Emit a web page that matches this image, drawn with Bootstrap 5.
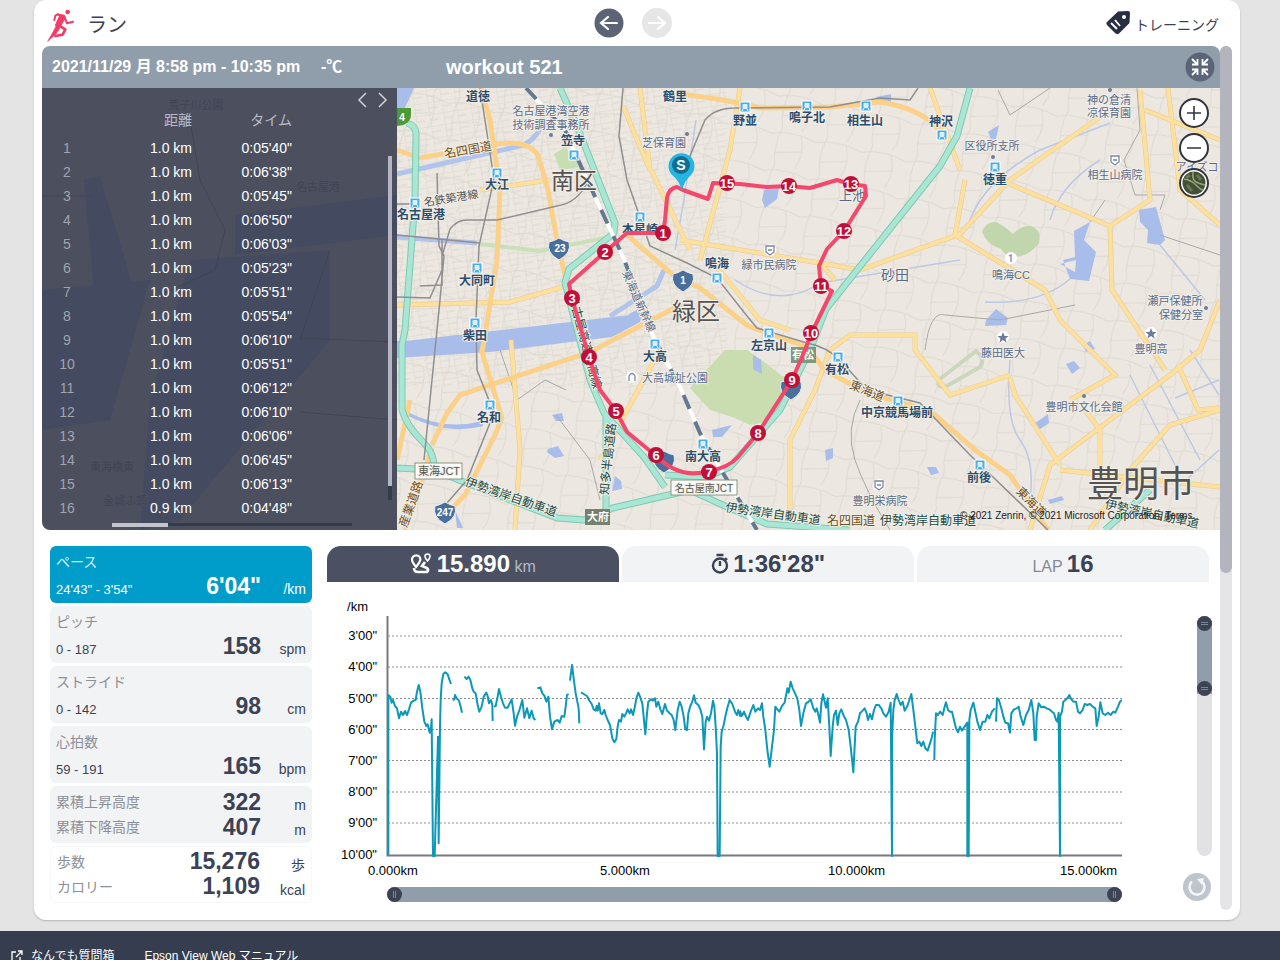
<!DOCTYPE html>
<html lang="ja">
<head>
<meta charset="utf-8">
<meta name="viewport" content="width=device-width, initial-scale=1">
<title>ラン - workout 521</title>
<link href="https://cdn.jsdelivr.net/npm/bootstrap@5.3.0/dist/css/bootstrap.min.css" rel="stylesheet">
<style>
:root { --ink:#3b4256; --slate:#909eab; --accent:#009cca; --pale:#f2f3f4; }
body { font-family:"Liberation Sans","Noto Sans CJK JP",sans-serif; font-size:14px; line-height:20px; color:var(--ink); background:#e4e4e4; }
button { font:inherit; }
.page-pad { padding:0 40px 11px 34px; }
.sheet { background:#fff; border-radius:12px; padding:0 8px 10px; box-shadow:0 1px 2px #b4b4b4; }
.sheet-head { display:grid; grid-template-columns:1fr auto 1fr; height:46px; padding:0 13px 0 4px; }
.sheet-head h1 { font-size:20px; line-height:28px; font-weight:400; margin:4px 0 0 11px; }
.round-btn { width:30px; height:30px; border:0; padding:0; border-radius:50%; display:flex; background:none; }
.info-bar { background:var(--slate); color:#fff; height:42px; padding:0 5px 0 10px; border-radius:8px 8px 0 0; font-weight:bold; font-size:16px; }
.info-bar .when { width:269px; }
.info-bar .temp { width:125px; }
.info-bar h2 { font-size:20px; font-weight:bold; }
.map-box { border-radius:0 0 0 8px; overflow:hidden; }
.map-svg { inset:0; width:100%; height:100%; }
.lap-panel { width:355px; background:rgba(62,67,84,.93); padding:0 0 10px; }
.lap-panel .pager { height:20px; padding:4px 6px 0 0; }
.pager button { border:0; background:none; padding:0; width:16px; height:16px; display:flex; }
.lap-tbl { width:100%; color:#fff; table-layout:fixed; }
.lap-tbl th, .lap-tbl td { height:24px; padding:0; font-weight:normal; text-align:right; }
.lap-tbl thead th { color:#b9bcc4; height:28px; padding-bottom:4px; }
.lap-tbl tbody th { color:#a0a4ae; text-align:center; }
.lap-tbl td:last-child, .lap-tbl th:last-child { padding-right:105px; }
.vbar { top:68px; right:5px; width:4px; height:344px; background:#363b4c; }
.vbar i { display:block; height:330px; background:#b4b6c4; }
.hbar { left:70px; bottom:4px; width:240px; height:3px; background:#363b4c; }
.hbar i { display:block; width:56px; height:4px; background:#c3c5cc; }
.map-tools { top:10px; right:11px; gap:5px; }
.map-tools button { background:#fff; border:2px solid #30343c; }
.rail-scroll { width:12px; background:#e5e5e7; border-radius:6px; }
.rail-scroll i { display:block; height:61%; background:#b3b4be; border-radius:6px; }
.lower { padding:16px 8px 7px; gap:15px; }
.stats { width:262px; gap:3px; }
.stat { height:57px; border:0; border-radius:6px; background:var(--pale); color:var(--ink); padding:3px 6px 0; text-align:left; display:block; width:100%; }
.stat.on { background:var(--accent); color:#fff; }
.stat .cap { color:#8b8f97; line-height:20px; }
.stat.on .cap { color:#d9f3fb; }
.stat .rng { font-size:13px; flex:1; padding-top:8px; }
.stat .val { font-size:23px; font-weight:bold; line-height:25px; }
.stat .unit { width:45px; text-align:right; padding-top:6px; }
.stat .row1 { display:flex; align-items:center; height:25px; }
.stat.two { padding-top:0; }
.stat.two .cap { flex:1; }
.stat.plain { background:#fff; border:1px solid #f8f8f8; padding:2px 6px 0; }
.stat .last { height:29px; }
.tabs { gap:3px; margin-right:3px; }
.tab { flex:1; border:0; height:36px; border-radius:14px 14px 0 0; background:var(--pale); color:var(--ink); font-size:16px; }
.tab b { font-size:24px; line-height:32px; }
.tab span { color:#868a94; }
.tab.on { background:#4b5162; color:#fff; }
.tab.on span { color:#b5b8c2; }
.chart-col { padding-top:14px; }
.chart-svg { width:100%; display:block; }
.chart-svg text { font-size:13px; fill:#000; }
.duo { display:grid; border-radius:8px; }
.duo input { grid-area:1/1; appearance:none; -webkit-appearance:none; background:none; margin:0; pointer-events:none; }
.duo-h { height:15px; margin:7px 0 0 60px; background:var(--slate); }
.duo-h input { width:100%; height:15px; }
.duo-v { width:15px; height:240px; background:linear-gradient(var(--slate) 78px,#e2e2e4 78px); }
.duo-v input { writing-mode:vertical-lr; width:15px; height:240px; }
.duo input::-webkit-slider-thumb { appearance:none; -webkit-appearance:none; pointer-events:auto; width:15px; height:15px; border-radius:50%; background:linear-gradient(90deg,transparent 6px,#7c8594 6px 7px,transparent 7px 8px,#7c8594 8px 9px,transparent 9px) center/15px 7px no-repeat,#3b4354; }
.duo-v input::-webkit-slider-thumb { background:linear-gradient(transparent 6px,#7c8594 6px 7px,transparent 7px 8px,#7c8594 8px 9px,transparent 9px) center/7px 15px no-repeat,#3b4354; }
.side-col { width:90px; padding-top:34px; gap:16px; }
.foot { background:#353d4f; flex:1 0 60px; padding:15px 11px; font-size:12px; gap:30px; }
.foot a { color:#fff; text-decoration:none; }
.m-st { font-weight:bold; fill:#2c4d6b; }
.m-poi { fill:#5a6b88; }
.m-big { fill:#555452; }
.m-road { fill:#6e4f22; }
.m-exp { fill:#1c4a3f; }
.m-box { fill:#555c4d; }
.m-w { fill:#fff; font-weight:bold; }
.labels text { text-anchor:middle; dominant-baseline:central; paint-order:stroke; stroke:#f1eee8; stroke-width:2px; }
.labels .m-w { stroke:none; }
</style>
</head>
<body class="vh-100 overflow-hidden d-flex flex-column">
<main class="page-pad">
<div class="sheet">
  <header class="sheet-head align-items-center">
    <div class="d-flex align-items-center">
      <svg width="30" height="38" viewBox="0 0 30 38" aria-hidden="true"><g transform="translate(-16 -4) scale(.33333)" fill="#f43a68" stroke="#f43a68" stroke-linejoin="round" stroke-linecap="round"><circle cx="113" cy="36" r="7" stroke="none"/><path d="M82 42L104 46 106 54 90 80 76 76 88 50Z" stroke-width="3"/><g fill="none"><path d="M84 43L76 47 73 60M104 52L111 70 129 65" stroke-width="6"/><path d="M86 76L106 88 98 104 76 108" stroke-width="8"/></g><path d="M80 76L90 84 78 102 53 124 68 98Z" stroke-width="2"/></g></svg>
      <h1>ラン</h1>
    </div>
    <nav class="d-flex" style="gap:18px">
      <button class="round-btn" aria-label="前へ"><svg width="30" height="30"><circle cx="15" cy="15" r="14.500" fill="#5b6375"/><path d="M23 15H7M14 9l-7 6 7 6" fill="none" stroke="#fff" stroke-width="2.200" stroke-linecap="round"/></svg></button>
      <button class="round-btn" aria-label="次へ"><svg width="30" height="30"><circle cx="15" cy="15" r="15" fill="#e6e6e6"/><path d="M7 15h16M16 9l7 6-7 6" fill="none" stroke="#fff" stroke-width="2.200" stroke-linecap="round"/></svg></button>
    </nav>
    <div class="d-flex align-items-center justify-content-end gap-1">
      <svg width="26" height="26" viewBox="0 0 26 26"><path d="M13 1.500 L23 1 Q25 1 25 3 L24.500 13 L14 23.500 Q12 25 10 23 L2 15 Q0.500 13 2 12Z" fill="#262e40"/><circle cx="19" cy="7" r="2" fill="#fff"/><path d="M6 13l6 6M10 10l5 6" stroke="#fff" stroke-width="1.900"/></svg>
      <span class="pt-1">トレーニング</span>
    </div>
  </header>
  <div class="d-flex">
    <div class="flex-fill">
      <div class="info-bar d-flex align-items-center">
        <span class="when text-nowrap">2021/11/29 月 8:58 pm - 10:35 pm</span><span class="temp">-℃</span>
        <h2 class="mb-0 flex-fill">workout 521</h2>
        <button class="round-btn" aria-label="縮小"><svg width="30" height="30"><circle cx="15" cy="15" r="14.500" fill="#5b6578"/><path d="M7 7l5 5M12.500 7v5.500H7M23 7l-5 5M17.500 7v5.500H23M7 23l5-5M12.500 23v-5.500H7M23 23l-5-5M17.500 23v-5.500H23" fill="none" stroke="#fff" stroke-width="1.800"/></svg></button>
      </div>
      <section class="map-box position-relative">
        <svg class="map-svg position-absolute" viewBox="42 88 1178 442" preserveAspectRatio="xMidYMid slice" role="img" aria-label="ルート地図">
          <defs>
            <pattern id="blocks" width="14" height="12" patternUnits="userSpaceOnUse" patternTransform="rotate(-9)"><path d="M0 0H14M0 0V12M0 6H9" fill="none" stroke="#dcd7ce" stroke-width="1"/></pattern>
            <pattern id="lanes" width="46" height="38" patternUnits="userSpaceOnUse" patternTransform="rotate(12)"><path d="M0 8Q20 0 46 8M10 0Q4 20 10 38M30 5Q38 22 30 38M8 26L34 20" fill="none" stroke="#ddd9d1" stroke-width="1"/></pattern>
            <g id="stn"><rect x="-5" y="-5" width="10" height="10" fill="#4baee6" stroke="#fff"/><rect x="-2.500" y="-3" width="5" height="5" rx="1" fill="#d9f0fc"/><path d="M-3 4l1-2M3 4l-1-2" stroke="#fff"/></g>
            <path id="shield" d="M-10-7Q-5-8 0-11Q5-8 10-7Q13 4 0 11Q-13 4-10-7Z" fill="#4a6f9b" stroke="#e9eef3"/>
          </defs>
          <rect x="42" y="88" width="1178" height="442" fill="#ece8e1"/>
          <rect x="397" y="88" width="330" height="300" fill="url(#blocks)"/>
          <rect x="397" y="88" width="823" height="442" fill="url(#lanes)"/>
          <path d="M235 215L397 195V235L235 255ZM42 290L150 280 110 420 42 430ZM190 260L330 250 330 340 180 520 140 530 150 400ZM84 180l16-4 34 114-40 0Z" fill="#8faaf0"/>
          <path d="M190 120L200 180 225 230 215 270 150 300M42 196H90M300 338L397 342M300 412L397 420M330 250L300 340" fill="none" stroke="#555" stroke-width="1"/>
          <!-- water and parks -->
          <g fill="#a9bdea">
            <path d="M397 342L490 346 610 332 625 325 640 308 631 313 610 328 490 338 397 341 397 358 490 352 612 337 640 322 645 308 L630 315Z"/>
            <path d="M1139 210L1156 207 1165 240 1160 245 1147 243 1148 230 1140 222ZM1074 231L1090 222 1084 240 1096 252 1089 281 1070 279 1063 260 1075 257ZM1076 260L1060 264 1075 272ZM986 320L996 309 1008 318 1006 325 985 326ZM1066 364L1074 361 1080 368 1072 374ZM1083 345l7-4 5 8-9 3ZM1034 424l14-10 1 9-10 7ZM1048 500l14-4 2 4-14 4ZM753 355l8 5 1 14-9-5ZM712 430l20-5-10 12-9 0ZM825 450l8-2 0 10-7 3ZM927 467l9 0 3 6-8 2ZM764 190l15-2-2 11-12 9-3-8ZM988 132l11-7-3 14-5 0ZM876 97l15-3 0 9-12 0ZM548 449l10-3 6 10-9 2-8-6ZM552 415l10-2 2 8-8 0ZM615 476l6 5 1 8-10 2ZM397 88l17 0-10 22-7 5Z"/>
            <path d="M408 416q40 20 75 10v-5q-40 10-75-9ZM455 510l8 18h-6Z"/>
          </g>
          <path d="M690 388l35-38 22 0 20 14 15 12 15 5-20 20-15 22-12 2-15-7-25-8Z" fill="#c9ddb0"/>
          <path d="M753 355l8 5 1 14-9-5Z" fill="#a9bdea"/>
          <path d="M982 232q4-11 14-10 10 5 17 12 8-9 18-8 11 4 8 17-10 14-26 14-6 1-12-8-14-4-19-17Z" fill="#c1d6ad"/>
          <path d="M554 154l10-6 10 5 6 14-20 3Z" fill="#c6deb2"/>
          <path d="M940 379q-5 8 5 8l35-20q6-8-4-16Z" fill="none" stroke="#cad7bd" stroke-width="4"/>
          <g fill="none" stroke="#b3c4ec" stroke-width="5"><path d="M397 174L524 145Q540 136 544 118M397 237L477 243M610 316L657 286 664 270"/></g>
          <path d="M480 244L540 251 604 238" fill="none" stroke="#cbe0b9" stroke-width="4"/>
          <g fill="none" stroke="#bcc8e6" stroke-width="1.500"><path d="M1160 245L1205 300M1070 279Q1040 305 985 302M1150 365L1200 460M1130 375L1175 465M1175 398L1219 380M1190 350L1219 395M1175 490L1219 450M735 280Q780 310 820 283L960 260M696 120L684 200 675 250M1010 360Q1005 420 1020 440T1030 500M1100 160Q1060 185 1050 220M970 220Q985 180 1040 150L1110 123"/></g>
          <g fill="none" stroke="#a9a9a7" stroke-width="1"><path d="M998 90L1010 115 1050 88M1137 88L1140 130 1124 160 1135 195 1165 195 1160 210M1105 200L1090 222M860 400Q845 430 855 460T890 530M925 350Q930 310 945 315L1000 320 1075 305M500 350L517 400 545 380 566 390M556 415L590 460 600 500M1160 235L1220 255"/></g>
          <!-- local roads -->
          <g fill="none" stroke="#e9c98f" stroke-width="5"><path d="M740 88L730 150 700 260M680 240L820 263 860 270 960 234 1010 180 1110 110M1000 180L1110 226M965 180L955 235 1045 290 1060 320 1115 375 1070 400M1168 88L1180 190 1220 225M1140 90L1150 200 1110 226 1112 290 1165 370M1145 110L1220 140M1220 300L1200 350 1170 375 1050 465 1030 530M1010 378L1015 395 1060 465M1178 365L1198 410 1220 408M1220 410L1170 425 1130 470 1090 530M1010 375L950 395 915 350 915 335 850 335 830 350M830 350L815 390 790 440 790 510M835 280L820 263M397 305L510 302 570 285M511 340L520 450 515 530M600 460L660 350M715 265L760 320 790 330M930 88L960 170M1085 410L1100 430 1100 475M1060 470L1220 487M623 106L650 170 640 88M650 168L690 250M480 190L550 180"/></g>
          <g fill="none" stroke="#fbe09f" stroke-width="4"><path d="M740 88L730 150 700 260M680 240L820 263 860 270 960 234 1010 180 1110 110M1000 180L1110 226M965 180L955 235 1045 290 1060 320 1115 375 1070 400M1168 88L1180 190 1220 225M1140 90L1150 200 1110 226 1112 290 1165 370M1145 110L1220 140M1220 300L1200 350 1170 375 1050 465 1030 530M1010 378L1015 395 1060 465M1178 365L1198 410 1220 408M1220 410L1170 425 1130 470 1090 530M1010 375L950 395 915 350 915 335 850 335 830 350M830 350L815 390 790 440 790 510M835 280L820 263M397 305L510 302 570 285M511 340L520 450 515 530M600 460L660 350M715 265L760 320 790 330M930 88L960 170M1085 410L1100 430 1100 475M1060 470L1220 487M623 106L650 170 640 88M650 168L690 250M480 190L550 180"/></g>
          <g fill="none" stroke="#fbd089" stroke-width="5"><path d="M481 88L490 120 500 190 497 260 485 335 482 352 502 418 495 435 465 495 445 515M397 150L420 158 487 146Q525 137 538 155L548 190 557 240 567 285M432 445L447 413 460 395 590 352 690 300M627 235L673 275 700 288 748 326 807 347 825 370 866 393 910 405 935 415 975 450 1010 475 1048 530M432 448L405 530M397 460L410 400M680 94Q730 100 760 108L830 107 880 102Q920 108 940 130"/></g>
          <!-- expressways -->
          <g fill="none" stroke="#7ec9b3" stroke-width="7" stroke-linejoin="round"><path d="M407 123Q417 126 416 136L415 200 405 330 402 345V410Q407 427 424 443 434 453 434 467M397 468L434 470 464 482 557 518 584 520 613 508 690 490 727 507 767 524 850 530M560 88L577 126 615 223 614 233 569 269 565 283 590 380 604 413 644 457 665 487M606 415V520M970 88L957 136 940 166 826 309 810 350 780 410 730 467 707 477 665 475M1105 530L1150 490"/></g>
          <g fill="none" stroke="#a9e6d4" stroke-width="5" stroke-linejoin="round"><path d="M407 123Q417 126 416 136L415 200 405 330 402 345V410Q407 427 424 443 434 453 434 467M397 468L434 470 464 482 557 518 584 520 613 508 690 490 727 507 767 524 850 530M560 88L577 126 615 223 614 233 569 269 565 283 590 380 604 413 644 457 665 487M606 415V520M970 88L957 136 940 166 826 309 810 350 780 410 730 467 707 477 665 475M1105 530L1150 490"/></g>
          <!-- railways -->
          <g fill="none" stroke="#908f90" stroke-width="1.500"><path d="M480 88L494 179 479 246 476 320 477 370 494 413 467 480 447 503M442 256L450 229Q457 220 467 220L497 220 557 206Q577 203 587 183M437 173L439 246 444 256 440 300 424 460M442 240V285L420 286M397 297L430 298 442 270M397 204H415M623 88L619 136 627 180 650 246 687 263 717 278 747 316 757 328 807 343Q827 347 840 360L867 390 920 403 970 455 993 477 1048 530M680 180L705 120Q715 108 735 108M397 235L480 243M735 108L830 107 880 98 910 100 918 88"/></g>
          <path d="M526 88L565 130 584 173 624 259 650 330 680 387 700 433 723 473 757 530" fill="none" stroke="#fff" stroke-width="4"/>
          <path d="M526 88L565 130 584 173 624 259 650 330 680 387 700 433 723 473 757 530" fill="none" stroke="#647991" stroke-width="4" stroke-dasharray="15 14"/>
          <g id="stations"></g>
          <use href="#shield" x="559" y="249"/><use href="#shield" x="683" y="281"/><use href="#shield" x="445" y="513"/><use href="#shield" x="791" y="389"/><use href="#shield" x="664" y="462"/>
          <path d="M397 108h14v6q0 11-14 12Z" fill="#4c9a35"/>
          <g fill="#fff" stroke="#8b927f"><rect x="415" y="463" width="47" height="16"/><rect x="671" y="480" width="66" height="15"/></g>
          <rect x="585" y="509" width="25" height="16" fill="#75806f"/><rect x="791" y="347" width="25" height="16" fill="#7d9a7c"/>
          <g class="labels" id="labels"></g>
          <g fill="#fff"><circle cx="770" cy="250" r="6"/><circle cx="1115" cy="160" r="6"/><circle cx="879" cy="485" r="6"/><circle cx="1011" cy="258" r="6"/><circle cx="1003" cy="337" r="6"/><circle cx="1151" cy="333" r="6"/><circle cx="632" cy="377" r="6"/></g>
          <g fill="none" stroke="#7a86a3" stroke-width="1.300"><path d="M766 246h8v6l-4 3-4-3ZM768 250h4M1111 156h8v6l-4 3-4-3ZM1113 160h4M875 481h8v6l-4 3-4-3ZM877 485h4M1009 256l2-1v7M629 381v-5q3-5 6 0v5"/></g>
          <g fill="#6c7b9a"><path id="star" d="M1003 332l1.500 4h4l-3 2.500 1 4-3.500-2.500-3.500 2.500 1-4-3-2.500h4Z"/><use href="#star" x="148" y="-4"/><circle cx="551" cy="135" r="2"/><circle cx="687" cy="134" r="2"/><circle cx="993" cy="157" r="2"/><circle cx="1084" cy="396" r="2"/><circle cx="1206" cy="308" r="2"/><circle cx="1110" cy="90" r="2"/></g>
          <path d="M683 190L677 187Q669 188 667 198L665 220 663 233 627 233 605 252 569 284 572 298 589 357 600 390 616 411 627 432 655 455Q680 480 709 471 728 468 738 457L758 433 792 380 805 350 811 334 832 291 821 286 819 266 827 249 844 231 866 196 865 186 851 184 837 180 810 188 788 186 767 187 740 184 713 183 708 199Z" fill="none" stroke="#f4476c" stroke-width="4" stroke-linejoin="round"/>
          <g class="labels" id="marks"></g>
          <path d="M682 191Q679 180 672 175A13 13 0 1 1 691 175Q684 181 682 191Z" fill="#27b5df"/><circle cx="681" cy="165" r="9" fill="#116e92"/>
          <g class="labels"><text class="m-w" x="681" y="165" font-size="14">S</text></g>
          <text x="960" y="519" font-size="10" fill="#222">© 2021 Zenrin, © 2021 Microsoft Corporation, Terms</text>
        </svg>
        <div class="lap-panel position-relative">
          <div class="pager d-flex justify-content-end gap-1">
            <button aria-label="前の項目"><svg width="16" height="16"><path d="M11 1L4 8l7 7" fill="none" stroke="#cfd1d8" stroke-width="1.500"/></svg></button>
            <button aria-label="次の項目"><svg width="16" height="16"><path d="M4 1l7 7-7 7" fill="none" stroke="#cfd1d8" stroke-width="1.500"/></svg></button>
          </div>
          <table class="lap-tbl"><colgroup><col style="width:50px"><col style="width:100px"><col></colgroup>
            <thead><tr><th></th><th>距離</th><th>タイム</th></tr></thead><tbody id="laps"></tbody></table>
          <div class="vbar position-absolute"><i></i></div><div class="hbar position-absolute"><i></i></div>
        </div>
        <div class="map-tools position-absolute d-flex flex-column">
          <button class="round-btn" aria-label="拡大"><svg width="26" height="26"><path d="M13 6v14M6 13h14" stroke="#30343c" stroke-width="1.600"/></svg></button>
          <button class="round-btn" aria-label="縮小"><svg width="26" height="26"><path d="M6 13h14" stroke="#30343c" stroke-width="1.600"/></svg></button>
          <button class="round-btn" aria-label="航空写真"><svg width="26" height="26"><circle cx="13" cy="13" r="11.500" fill="#445036"/><path d="M3 9q7 1 12 6t7 5M12 2q-1 8 3 10t9 3" fill="none" stroke="#98a17d" stroke-width="1.500"/><path d="M6 15l5 6M16 5l4 5M9 5l-4 3" stroke="#687653" stroke-width="3"/></svg></button>
        </div>
      </section>
      <section class="lower d-flex">
        <div class="stats d-flex flex-column">
          <button class="stat on"><div class="cap">ペース</div><div class="row1 last"><span class="rng">24'43" - 3'54"</span><span class="val">6'04"</span><span class="unit">/km</span></div></button>
          <button class="stat"><div class="cap">ピッチ</div><div class="row1 last"><span class="rng">0 - 187</span><span class="val">158</span><span class="unit">spm</span></div></button>
          <button class="stat"><div class="cap">ストライド</div><div class="row1 last"><span class="rng">0 - 142</span><span class="val">98</span><span class="unit">cm</span></div></button>
          <button class="stat"><div class="cap">心拍数</div><div class="row1 last"><span class="rng">59 - 191</span><span class="val">165</span><span class="unit">bpm</span></div></button>
          <button class="stat two"><div class="row1"><span class="cap">累積上昇高度</span><span class="val">322</span><span class="unit">m</span></div><div class="row1"><span class="cap">累積下降高度</span><span class="val">407</span><span class="unit">m</span></div></button>
          <div class="stat two plain"><div class="row1"><span class="cap">歩数</span><span class="val">15,276</span><span class="unit">歩</span></div><div class="row1"><span class="cap">カロリー</span><span class="val">1,109</span><span class="unit">kcal</span></div></div>
        </div>
        <div class="flex-fill">
          <div class="tabs d-flex">
            <button class="tab on"><svg width="22" height="22" viewBox="0 0 22 22" style="vertical-align:-3px"><g fill="none" stroke="#fff" stroke-width="2.200"><path d="M6 14Q2 9 2 6.500a4.200 4.200 0 0 1 8.400 0Q10 9 6 14Z"/><path d="M17.500 8Q15 5 15 3.500a2.500 2.500 0 0 1 5 0Q20 5 17.500 8Z" stroke-width="1.600"/><path d="M4 15q0 4 4 4h9q2-2 0-4l-5-2 3-4" stroke-width="2.600"/></g></svg> <b>15.890</b> <span>km</span></button>
            <button class="tab"><svg width="18" height="22" viewBox="0 0 18 22" style="vertical-align:-3px"><g fill="none" stroke="#3b4256" stroke-width="2.400"><circle cx="9" cy="12.500" r="7"/><path d="M5.500 2h7M9 8v5M14 5l2 2"/></g></svg> <b>1:36'28"</b></button>
            <button class="tab"><span>LAP</span> <b>16</b></button>
          </div>
          <div class="d-flex">
            <div class="chart-col flex-fill">
              <svg class="chart-svg" viewBox="327 596 795 284" role="img" aria-label="ペースのグラフ">
                <g stroke="#8d8d8d" stroke-dasharray="2 2"><path d="M388 636H1122M388 667H1122M388 698.500H1122M388 729.500H1122M388 760.500H1122M388 792H1122M388 823H1122"/></g>
                <path d="M387.500 616V855.500H1122" fill="none" stroke="#777b80" stroke-width="2"/>
                <g text-anchor="end"><text x="368" y="611">/km</text><text x="377" y="640">3'00"</text><text x="377" y="671">4'00"</text><text x="377" y="703">5'00"</text><text x="377" y="734">6'00"</text><text x="377" y="765">7'00"</text><text x="377" y="796">8'00"</text><text x="377" y="827">9'00"</text><text x="377" y="859">10'00"</text></g>
                <g><text x="368" y="875">0.000km</text><text x="600" y="875">5.000km</text><text x="828" y="875">10.000km</text><text x="1060" y="875">15.000km</text></g>
                <g fill="none" stroke="#0c98b8" stroke-width="6" stroke-linejoin="round">
                  <g transform="translate(325 540) scale(.33333)"><path d="M190 948V465L196 470 200 488 204 480 210 498 216 505 222 535 228 515 234 525 240 513 246 525 252 508 258 488 266 482 272 480 276 455 281 435 286 455 292 505 298 545 304 558 308 553 314 578 318 562 320 538 324 948 329 948 336 700 339 590 341 910 345 560 347 480 350 430 355 402 361 397 368 403 373 418 378 432M383 480L388 478 390 465 395 475 402 482 407 500 411 518M418 410L425 417 431 410 436 420 442 445 446 455 452 460 458 495 463 515 470 500 476 470 484 458 488 468 492 490 498 480 502 495 503 543M507 500L512 498 517 475 522 447 528 470 534 490 540 503 548 503 554 490 560 478 566 520 570 557 576 530 584 508 592 480 598 533 606 505 613 535 620 512 626 535 631 540M637 445L646 442 652 460 658 467 664 485 670 470 675 530 681 568 688 545 698 540 704 548 710 528 718 530 722 500 726 465 731 462M735 422L741 375 746 415 752 460 757 485 761 505 763 550M768 457L776 462 786 468 792 480 800 492 806 508 812 512 815 498 818 512 822 490 827 520 832 522 838 510 842 525 848 540 855 555 862 595 868 607 874 597 878 560 882 540 888 545 892 522 898 530 904 518 908 508 914 520 918 508 924 525 928 508 934 475 940 458 946 472 952 490 956 530 961 583 966 520 970 485 978 478 984 482 990 475 994 500 1000 485 1006 508 1012 522 1020 492 1026 512 1034 520 1040 525 1046 540 1051 570 1058 510 1064 485 1070 500 1076 530 1081 568 1086 570 1090 520 1096 498 1102 485 1107 466 1112 488 1120 495 1126 508 1132 530 1137 628 1142 545 1146 530 1152 542 1158 520 1164 482 1168 500 1172 560 1176 640 1178 948 1184 948 1187 620 1190 575 1196 555 1202 525 1208 500 1214 480 1222 492 1230 515 1236 525 1240 510 1246 530"/></g>
                  <g transform="translate(740 540) scale(.33333)"><path d="M0 512L5 528 12 515 18 530 24 540 32 515 40 495 46 515 54 505 60 510 66 490 70 530 76 570 82 630 89 680 96 620 102 570 106 500 112 508 118 515 126 498 134 488 142 445 146 458 152 425 158 445 164 458 172 475 178 510 183 558 190 520 198 490 206 485 212 478 220 505 226 515 230 505 234 520 240 548 244 490 249 463 254 485 258 503 263 475 268 560 272 648 278 560 282 525 288 512 293 555 298 520 304 508 310 525 318 540 326 570 332 620 340 697 347 560 354 545 360 520 368 512 374 505 380 520 384 540 390 522 396 538 402 510 408 495 416 495 424 505 430 520 438 530 446 515 452 488 456 948 456 600 460 510 464 480 470 462 476 480 482 495 488 485 494 512 502 498 508 480 514 462 520 510 526 560 532 610 538 605 544 618 550 605 556 625 563 632 570 610 576 590 579 575M583 660L584 600 588 520 594 525 600 515 608 525 614 500 618 487 624 510 630 515 636 515 642 540 648 565 654 577 660 560 666 572 674 560 682 548 682 948 686 948 688 540 692 510 700 488 706 515 712 545 720 570 728 545 736 545 742 525 748 535 756 515 764 505M768 545L771 475 776 478 784 505 790 530 796 548 804 550 810 578 814 520 822 508 830 505 836 500 842 530 850 555 858 525 866 510 874 480 880 520 884 600 888 600 890 530 896 490 904 502 912 500 920 505 928 508 936 515 942 520 948 540 952 545 956 518 960 948 960 530 966 515 970 485 976 480 982 475 988 465 994 478 1000 485 1008 485 1014 515 1020 520 1028 510 1034 492 1042 495 1050 492 1058 500 1066 505 1070 558 1076 530 1081 487 1088 520 1096 525 1104 518 1112 525 1120 515 1126 518 1134 500 1140 485 1146 480"/></g>
                </g>
              </svg>
              <div class="duo duo-h"><input type="range" value="0" aria-label="開始位置"><input type="range" value="100" aria-label="終了位置"></div>
            </div>
            <div class="side-col d-flex flex-column align-items-end">
              <div class="duo duo-v"><input type="range" value="0" aria-label="上限"><input type="range" value="29" aria-label="下限"></div>
              <button class="round-btn" aria-label="リセット"><svg width="30" height="30"><circle cx="15" cy="15" r="14" fill="#bec5cc"/><path d="M10 9.500a7.500 7.500 0 1 0 10 0" fill="none" stroke="#f4f6f8" stroke-width="2.600"/><path d="M15 7l7-1-2 7Z" fill="#f4f6f8"/></svg></button>
            </div>
          </div>
        </div>
      </section>
    </div>
    <div class="rail-scroll"><i></i></div>
  </div>
</div>
</main>
<footer class="foot d-flex align-items-start">
  <a href="#"><svg width="12" height="12" style="vertical-align:-2px;margin-right:8px"><path d="M5 2H1v9h8V7M7 1h4v4M11 1L5 7" fill="none" stroke="#fff" stroke-width="1.300"/></svg>なんでも質問箱</a>
  <a href="#">Epson View Web マニュアル</a>
</footer>
<script src="https://cdn.jsdelivr.net/npm/bootstrap@5.3.0/dist/js/bootstrap.bundle.min.js"></script>
<script>
const times = ["05'40","06'38","05'45","06'50","06'03","05'23","05'51","05'54","06'10","05'51","06'12","06'10","06'06","06'45","06'13","04'48"];
document.getElementById('laps').innerHTML = times.map((t, i) =>
  `<tr><th scope="row">${i + 1}</th><td>${i < 15 ? '1.0' : '0.9'} km</td><td>0:${t}"</td></tr>`).join('');

const stations = [[574,155],[497,173],[415,203],[640,217],[477,268],[475,323],[490,405],[745,107],[807,106],[866,106],[942,135],[717,278],[995,167],[655,344],[703,444],[769,333],[838,357],[898,401],[980,465]];
document.getElementById('stations').innerHTML = stations.map(([x, y]) => `<use href="#stn" x="${x}" y="${y}"/>`).join('');

// [x, y, text, size, kind, rotation]
const labels = [
  [478,97,'道徳',12,'st'],[551,111,'名古屋港湾空港',11,'poi'],[551,125,'技術調査事務所',11,'poi'],[573,141,'笠寺',12,'st'],
  [468,150,'名四国道',12,'road',-10],[497,185,'大江',12,'st'],[574,181,'南区',23,'big'],[451,198,'名鉄築港線',11,'big',-9],
  [421,215,'名古屋港',12,'st'],[477,281,'大同町',12,'st'],[475,336,'柴田',12,'st'],[489,418,'名和',12,'st'],[675,97,'鶴里',12,'st'],
  [664,143,'芝保育園',11,'poi'],[640,230,'本星崎',12,'st'],[696,311,'緑区',24,'big'],[717,264,'鳴海',12,'st'],[769,265,'緑市民病院',11,'poi'],
  [745,121,'野並',12,'st'],[807,118,'鳴子北',12,'st'],[865,121,'相生山',12,'st'],[941,122,'神沢',12,'st'],[852,195,'上池',13,'poi'],
  [895,275,'砂田',14,'poi'],[1109,100,'神の倉清',11,'poi'],[1109,113,'凉保育園',11,'poi'],[992,146,'区役所支所',11,'poi'],[995,180,'徳重',12,'st'],
  [1115,175,'相生山病院',11,'poi'],[1197,167,'アイズコ',11,'poi'],[1011,275,'鳴海CC',11,'poi'],[1175,301,'瀬戸保健所',11,'poi'],[1181,315,'保健分室',11,'poi'],
  [1151,349,'豊明高',11,'poi'],[1003,353,'藤田医大',11,'poi'],[1084,407,'豊明市文化会館',11,'poi'],[979,478,'前後',12,'st'],[1141,484,'豊明市',36,'big'],
  [880,501,'豊明栄病院',11,'poi'],[897,413,'中京競馬場前',12,'st'],[867,391,'東海道',12,'road',22],[837,370,'有松',12,'st'],[769,346,'左京山',12,'st'],
  [703,457,'南大高',12,'st'],[655,357,'大高',12,'st'],[675,378,'大高城址公園',11,'poi'],[639,301,'東海道新幹線',11,'poi',66],
  [585,342,'名古屋高速大高線',12,'exp',75],[608,459,'知多半島道路',12,'exp',-84],[511,497,'伊勢湾岸自動車道',12,'exp',19],[773,514,'伊勢湾岸自動車道',12,'exp',8],
  [851,521,'名四国道',12,'road'],[928,521,'伊勢湾岸自動車道',12,'exp'],[1031,502,'東海道',12,'road',45],[1152,514,'伊勢湾岸自動車道',12,'exp',12],
  [411,504,'産業道路',12,'road',-70],[439,471,'東海JCT',11,'box'],[704,488,'名古屋南JCT',10,'box'],[598,517,'大府',11,'w'],[803,355,'有松',11,'w'],
  [560,248,'23',10,'w'],[683,280,'1',10,'w'],[445,512,'247',10,'w'],[402,117,'4',10,'w'],
  [196,105,'荒子川公園',11,'box'],[318,187,'名古屋港',11,'box'],[112,467,'東海橋東',11,'box'],[125,501,'金城ふ頭',11,'box']];
const label = ([x, y, t, s, k, r]) => `<text class="m-${k}" x="${x}" y="${y}" font-size="${s}"${r ? ` transform="rotate(${r} ${x} ${y})"` : ''}>${t}</text>`;
document.getElementById('labels').innerHTML = labels.map(label).join('');

const marks = [[663,233],[605,252],[572,298],[589,357],[616,411],[656,455],[709,472],[758,433],[792,380],[811,333],[821,286],[844,231],[851,184],[789,186],[727,183]];
document.getElementById('marks').innerHTML = marks.map(([x, y], i) => `<circle cx="${x}" cy="${y}" r="8" fill="#c20f38"/>` + label([x, y, i + 1, 13, 'w'])).join('');
</script>
</body>
</html>
